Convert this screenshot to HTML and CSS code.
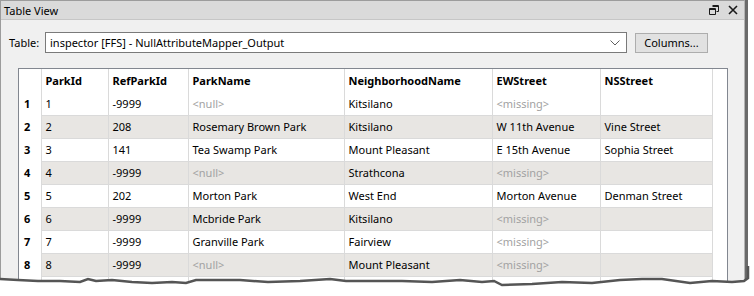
FILE: index.html
```html
<!DOCTYPE html>
<html>

<head>
  <title>Table View</title>
  <link rel="stylesheet" href="styles.css">
</head>

<body>
  <div class="frame">
    <!-- Docked window -->
    <div class="window">
      <div class="titlebar">
        <span>Table View</span>
        <div class="tools">
          <svg width="10" height="10" viewBox="0 0 10 10">
            <path d="M3.5 0.5h6v6h-2M0.5 3.5h6v6h-6z M3.5 1.5h6M0.5 4.5h6" fill="none" stroke="#1a1a1a" stroke-width="1"/>
          </svg>
          <svg width="10" height="10" viewBox="0 0 10 10">
            <path d="M1 1L9 9M9 1L1 9" stroke="#1a1a1a" stroke-width="1.6"/>
          </svg>
        </div>
      </div>

      <div class="panel">
        <!-- Table picker -->
        <div class="toolbar">
          <span class="label">Table:</span>
          <div class="combo">
            <span>inspector [FFS] - NullAttributeMapper_Output</span>
            <svg width="10" height="6" viewBox="0 0 10 6">
              <path d="M0.5 0.5L5 5L9.5 0.5" fill="none" stroke="#606060" stroke-width="1"/>
            </svg>
          </div>
          <button class="btn">Columns...</button>
        </div>

        <!-- Feature table -->
        <div class="grid">
          <table>
            <colgroup>
              <col class="c0"><col class="c1"><col class="c2"><col class="c3"><col class="c4"><col class="c5"><col class="c6"><col>
            </colgroup>
            <thead>
              <tr><th></th><th>ParkId</th><th>RefParkId</th><th>ParkName</th><th>NeighborhoodName</th><th>EWStreet</th><th>NSStreet</th><th class="pad"></th></tr>
            </thead>
            <tbody>
              <tr><th>1</th><td>1</td><td>-9999</td><td class="nil">&lt;null&gt;</td><td>Kitsilano</td><td class="nil">&lt;missing&gt;</td><td></td><td class="pad"></td></tr>
              <tr><th>2</th><td>2</td><td>208</td><td>Rosemary Brown Park</td><td>Kitsilano</td><td>W 11th Avenue</td><td>Vine Street</td><td class="pad"></td></tr>
              <tr><th>3</th><td>3</td><td>141</td><td>Tea Swamp Park</td><td>Mount Pleasant</td><td>E 15th Avenue</td><td>Sophia Street</td><td class="pad"></td></tr>
              <tr><th>4</th><td>4</td><td>-9999</td><td class="nil">&lt;null&gt;</td><td>Strathcona</td><td class="nil">&lt;missing&gt;</td><td></td><td class="pad"></td></tr>
              <tr><th>5</th><td>5</td><td>202</td><td>Morton Park</td><td>West End</td><td>Morton Avenue</td><td>Denman Street</td><td class="pad"></td></tr>
              <tr><th>6</th><td>6</td><td>-9999</td><td>Mcbride Park</td><td>Kitsilano</td><td class="nil">&lt;missing&gt;</td><td></td><td class="pad"></td></tr>
              <tr><th>7</th><td>7</td><td>-9999</td><td>Granville Park</td><td>Fairview</td><td class="nil">&lt;missing&gt;</td><td></td><td class="pad"></td></tr>
              <tr><th>8</th><td>8</td><td>-9999</td><td class="nil">&lt;null&gt;</td><td>Mount Pleasant</td><td class="nil">&lt;missing&gt;</td><td></td><td class="pad"></td></tr>
              <tr><th>9</th><td>9</td><td>-9999</td><td>Creekside Park</td><td>Strathcona</td><td>Terminal Avenue</td><td>Quebec Street</td><td class="pad"></td></tr>
            </tbody>
          </table>
        </div>
      </div>
    </div>

    <!-- Torn paper edge over the bottom of the capture -->
    <svg class="tear" width="754" height="30" viewBox="0 0 754 30">
      <path d="M0 13 L18 14 L38 15 L60 15 L80 16 L88 13 L96 15 L112 14 L132 16 L152 17 L172 16 L186 17 L196 14 L214 14 L240 14 L268 16 L300 15 L330 13 L346 15 L376 15 L402 15 L432 16 L460 14 L482 16 L494 15 L502 19 L532 18 L562 16 L592 17 L620 14 L642 13 L662 13 L690 17 L712 15 L732 16 L744 15 L748 12 L748 0 L754 0 L754 30 L0 30 Z" fill="#fff"/>
      <path d="M0 13 L18 14 L38 15 L60 15 L80 16 L88 13 L96 15 L112 14 L132 16 L152 17 L172 16 L186 17 L196 14 L214 14 L240 14 L268 16 L300 15 L330 13 L346 15 L376 15 L402 15 L432 16 L460 14 L482 16 L494 15 L502 19 L532 18 L562 16 L592 17 L620 14 L642 13 L662 13 L690 17 L712 15 L732 16 L744 15 L748 12 L748 0" fill="none" stroke="#555" stroke-width="2.5"/>
    </svg>
  </div>
</body>

</html>
```

FILE: styles.css
```css
/* Reset */
* {
  margin: 0;
  padding: 0;
  box-sizing: border-box;
}

body {
  background: #fff;
  font-family: "Noto Sans", "Open Sans", sans-serif;
  font-size: 11px;
  color: #000;
  overflow: hidden;
}

.frame {
  position: relative;
  width: 754px;
  height: 296px;
  overflow: hidden;
}

/* Window with dark drop shadow on the right */
.window {
  width: 745px;
  height: 320px;
  background: #f0f0f0;
  border-top: 1px solid #9c9c9c;
  border-left: 1px solid #9c9c9c;
  border-right: 1px solid #b4b4b4;
  box-shadow: 3px 0 0 #6a6a6a;
}

.titlebar {
  height: 19px;
  background: #dadada;
  border-bottom: 1px solid #c6c6c6;
  display: flex;
  align-items: center;
  justify-content: space-between;
  padding: 0 6px 0 3px;
}

.tools {
  display: flex;
  gap: 9px;
  align-items: center;
}

.panel {
  padding: 12px 0 0 17px;
}

/* Table picker row */
.toolbar {
  display: flex;
  align-items: center;
  height: 21px;
}

.label {
  margin-left: -9px;
  width: 36px;
}

.combo {
  width: 582px;
  height: 21px;
  background: #fff;
  border: 1px solid #7a7a7a;
  display: flex;
  align-items: center;
  justify-content: space-between;
  padding: 0 6px 0 4px;
}

.btn {
  margin-left: 8px;
  width: 73px;
  height: 20px;
  background: #e1e1e1;
  border: 1px solid #adadad;
  font: inherit;
  color: #000;
}

/* Grid */
.grid {
  margin-top: 15px;
  width: 710px;
  height: 240px;
  background: #fff;
  border: 1px solid #828790;
  border-bottom: 0;
}

table {
  border-collapse: collapse;
  table-layout: fixed;
  width: 100%;
}

.c0 { width: 22px; }
.c1 { width: 67px; }
.c2 { width: 80px; }
.c3 { width: 156px; }
.c4 { width: 148px; }
.c5 { width: 108px; }
.c6 { width: 112px; }

th,
td {
  height: 23px;
  padding: 0 4px;
  text-align: left;
  white-space: nowrap;
  overflow: hidden;
}

thead th {
  font-weight: bold;
  border-right: 1px solid #dadada;
}

tbody td {
  border-right: 1px solid #dadada;
  border-bottom: 1px solid #dadada;
}

tbody th {
  font-weight: bold;
  padding-left: 5px;
  border-right: 1px solid #dadada;
  background: #fff;
}

tbody tr:nth-child(even) td {
  background: #e8e6e3;
}

tbody tr:nth-child(even) td.pad,
tbody td.pad,
thead th.pad {
  background: #fff;
  border: 0;
}

.nil {
  color: #a2a2a2;
}

.tear {
  position: absolute;
  left: 0;
  bottom: 0;
}
```
